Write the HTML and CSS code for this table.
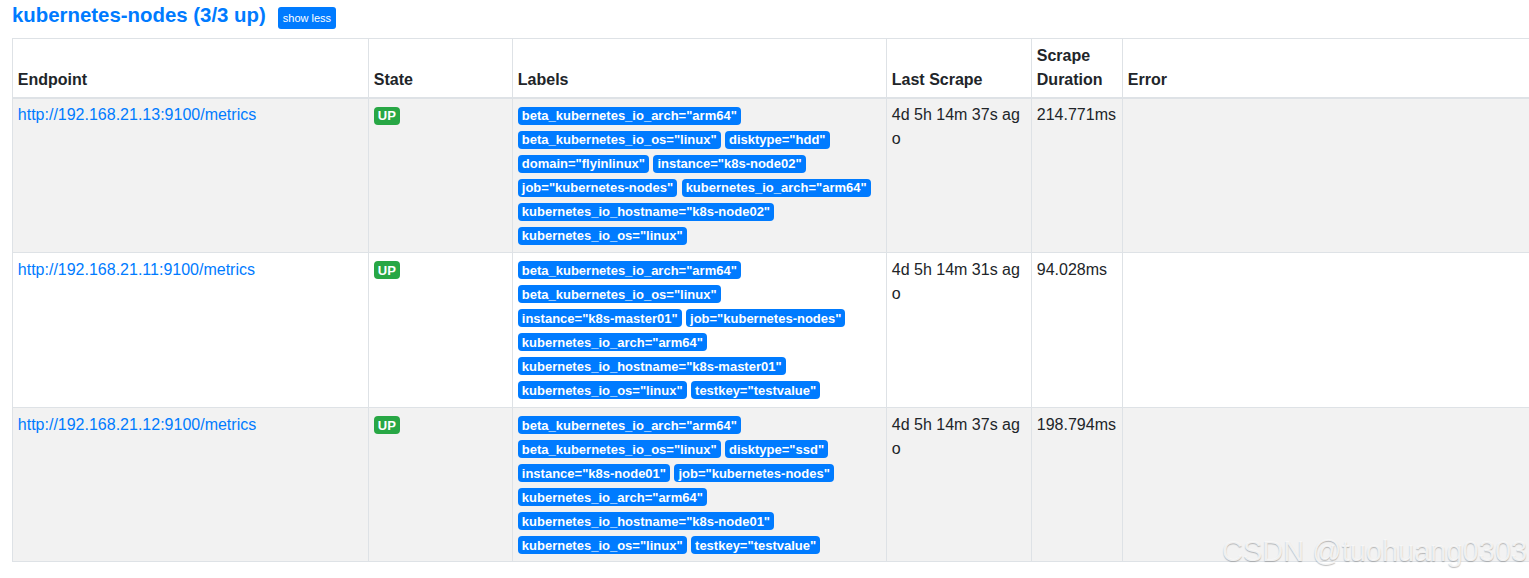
FILE: index.html
```html
<!DOCTYPE html>
<html>
<head>
<meta charset="utf-8">
<link rel="stylesheet" href="styles.css">
</head>
<body>
<div class="pool">
  <div class="pool-header">
    <a class="pool-title" href="#">kubernetes-nodes (3/3 up)</a>
    <button class="btn-xs">show less</button>
  </div>
  <table class="targets">
    <colgroup>
      <col class="c-endpoint"><col class="c-state"><col class="c-labels"><col class="c-last"><col class="c-dur"><col>
    </colgroup>
    <thead>
      <tr>
        <th>Endpoint</th>
        <th>State</th>
        <th>Labels</th>
        <th>Last Scrape</th>
        <th>Scrape Duration</th>
        <th>Error</th>
      </tr>
    </thead>
    <tbody>
      <tr class="odd">
        <td><a class="link" href="#">http://192.168.21.13:9100/metrics</a></td>
        <td><span class="badge badge-up">UP</span></td>
        <td><span class="badge">beta_kubernetes_io_arch="arm64"</span> <span class="badge">beta_kubernetes_io_os="linux"</span> <span class="badge">disktype="hdd"</span> <span class="badge">domain="flyinlinux"</span> <span class="badge">instance="k8s-node02"</span> <span class="badge">job="kubernetes-nodes"</span> <span class="badge">kubernetes_io_arch="arm64"</span> <span class="badge">kubernetes_io_hostname="k8s-node02"</span> <span class="badge">kubernetes_io_os="linux"</span></td>
        <td class="brk">4d 5h 14m 37s ago</td>
        <td>214.771ms</td>
        <td></td>
      </tr>
      <tr>
        <td><a class="link" href="#">http://192.168.21.11:9100/metrics</a></td>
        <td><span class="badge badge-up">UP</span></td>
        <td><span class="badge">beta_kubernetes_io_arch="arm64"</span> <span class="badge">beta_kubernetes_io_os="linux"</span> <span class="badge">instance="k8s-master01"</span> <span class="badge">job="kubernetes-nodes"</span> <span class="badge">kubernetes_io_arch="arm64"</span> <span class="badge">kubernetes_io_hostname="k8s-master01"</span> <span class="badge">kubernetes_io_os="linux"</span> <span class="badge">testkey="testvalue"</span></td>
        <td class="brk">4d 5h 14m 31s ago</td>
        <td>94.028ms</td>
        <td></td>
      </tr>
      <tr class="odd">
        <td><a class="link" href="#">http://192.168.21.12:9100/metrics</a></td>
        <td><span class="badge badge-up">UP</span></td>
        <td><span class="badge">beta_kubernetes_io_arch="arm64"</span> <span class="badge">beta_kubernetes_io_os="linux"</span> <span class="badge">disktype="ssd"</span> <span class="badge">instance="k8s-node01"</span> <span class="badge">job="kubernetes-nodes"</span> <span class="badge">kubernetes_io_arch="arm64"</span> <span class="badge">kubernetes_io_hostname="k8s-node01"</span> <span class="badge">kubernetes_io_os="linux"</span> <span class="badge">testkey="testvalue"</span></td>
        <td class="brk">4d 5h 14m 37s ago</td>
        <td>198.794ms</td>
        <td></td>
      </tr>
    </tbody>
  </table>
</div>
<div class="watermark">CSDN @tuohuang0303</div>
</body>
</html>
```

FILE: styles.css
```css
html, body {
  margin: 0;
  padding: 0;
  overflow: hidden;
  background: #fff;
}
body {
  font-family: "Liberation Sans", Arial, sans-serif;
  font-size: 16px;
  line-height: 1.5;
  color: #212529;
  position: relative;
  width: 1529px;
  height: 578px;
}
.pool {
  padding-left: 12px;
}
.pool-header {
  display: flex;
  align-items: flex-start;
  height: 38px;
}
.pool-title {
  font-size: 20.4px;
  font-weight: 700;
  line-height: 30px;
  color: #007bff;
  text-decoration: none;
}
.btn-xs {
  margin-left: 12px;
  margin-top: 7px;
  height: 22px;
  padding: 0 5px;
  font-family: "Liberation Sans", Arial, sans-serif;
  font-size: 11px;
  line-height: 22px;
  color: #fff;
  background: #007bff;
  border: none;
  border-radius: 3px;
}
.targets {
  border-collapse: collapse;
  table-layout: fixed;
  width: 1530px;
}
.c-endpoint { width: 356px; }
.c-state { width: 144px; }
.c-labels { width: 374px; }
.c-last { width: 145px; }
.c-dur { width: 91px; }
.targets th, .targets td {
  border: 1px solid #dee2e6;
  padding: 4.8px;
  text-align: left;
  vertical-align: top;
}
.targets th {
  vertical-align: bottom;
  border-bottom: 2px solid #dee2e6;
  font-weight: 700;
}
.targets tr.odd td {
  background: #f2f2f2;
}
.link {
  color: #007bff;
  text-decoration: none;
}
.brk {
  word-break: break-all;
}
.badge {
  display: inline-block;
  padding: 2.5px 4px;
  font-size: 13px;
  font-weight: 700;
  line-height: 1;
  color: #fff;
  background: #007bff;
  border-radius: 4px;
  white-space: nowrap;
  vertical-align: baseline;
}
.badge-up {
  background: #28a745;
}
.watermark {
  position: absolute;
  left: 1222px;
  top: 531px;
  font-family: "Liberation Sans", Arial, sans-serif;
  font-size: 29px;
  line-height: 40px;
  color: rgba(250, 250, 250, 0.85);
  text-shadow: 0 1px 1px rgba(0, 0, 0, 0.25);
  white-space: nowrap;
}
```
